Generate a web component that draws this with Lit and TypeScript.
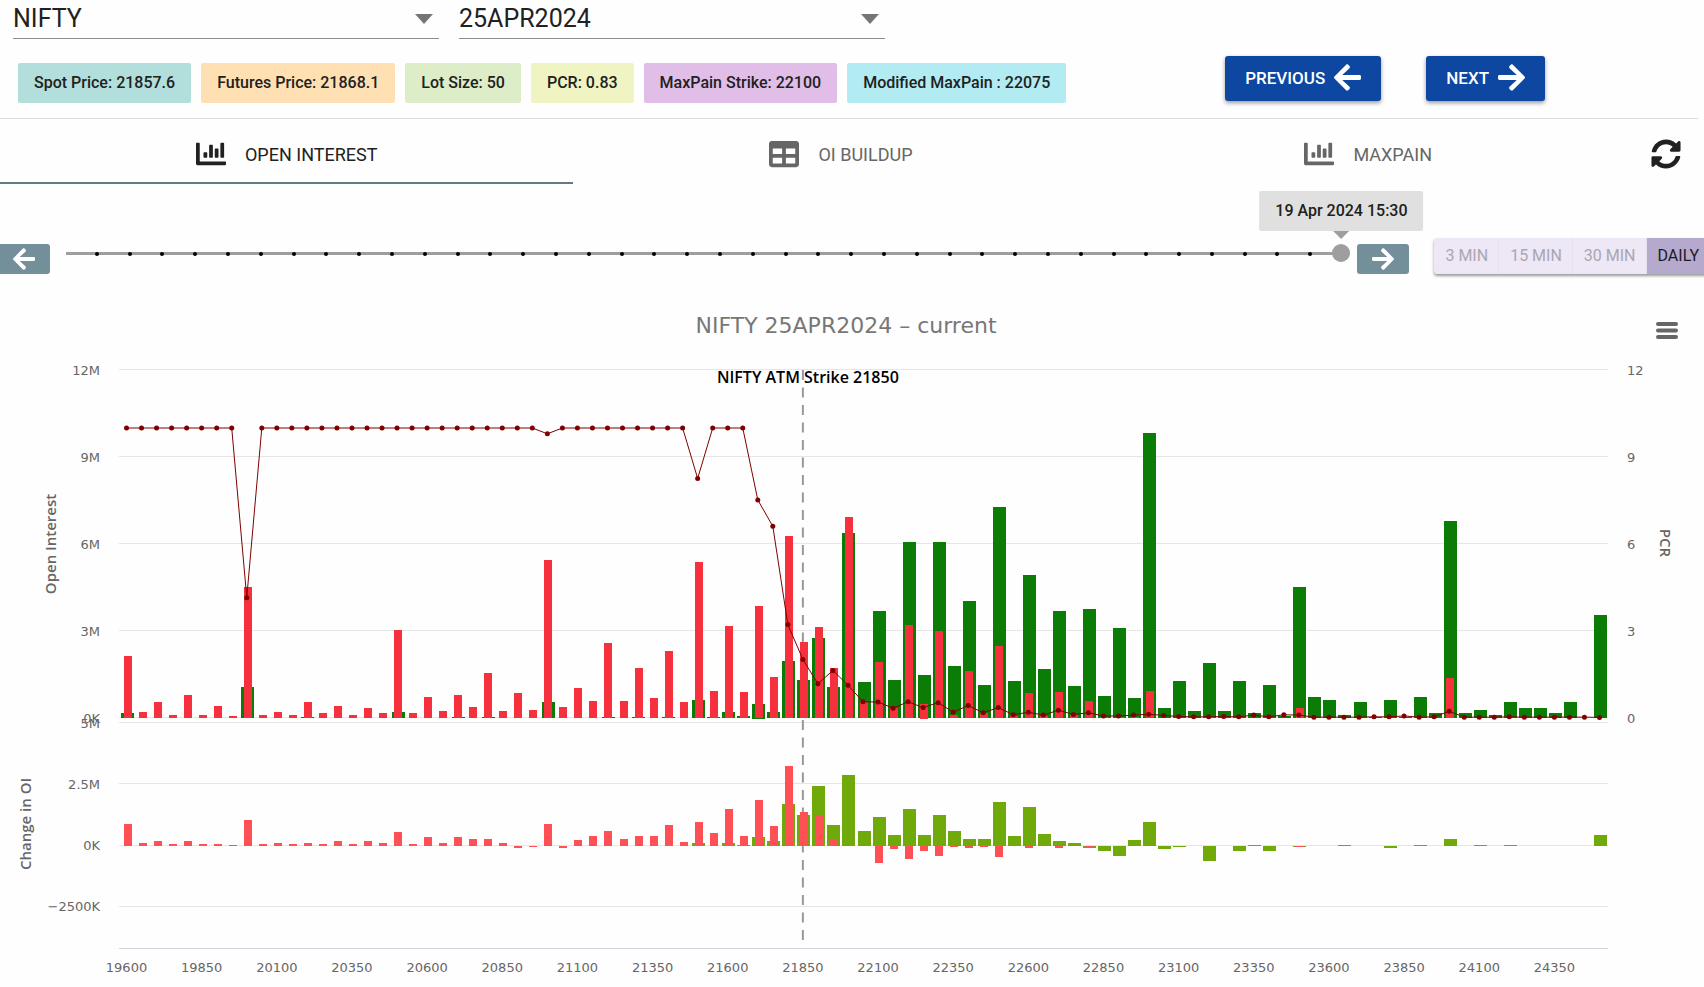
import { LitElement, html, svg, css } from "lit";
import { customElement, property, state } from "lit/decorators.js";
import { classMap } from "lit/directives/class-map.js";

const ICONS: Record<string, { box: string; d: string }> = {
  left: {
    box: "0 32 448 448",
    d: "M257.5 445.1l-22.2 22.2c-9.4 9.4-24.6 9.4-33.9 0L7 273c-9.4-9.4-9.4-24.6 0-33.9L201.4 44.7c9.4-9.4 24.6-9.4 33.9 0l22.2 22.2c9.5 9.5 9.3 25-.4 34.3L136.6 216H424c13.3 0 24 10.7 24 24v32c0 13.3-10.7 24-24 24H136.6l120.5 114.8c9.8 9.3 10 24.8.4 34.3z",
  },
  right: {
    box: "0 32 448 448",
    d: "M190.5 66.9l22.2-22.2c9.4-9.4 24.6-9.4 33.9 0L441 239c9.4 9.4 9.4 24.6 0 33.9L246.6 467.3c-9.4 9.4-24.6 9.4-33.9 0l-22.2-22.2c-9.5-9.5-9.3-25 .4-34.3L311.4 296H24c-13.3 0-24-10.7-24-24v-32c0-13.3 10.7-24 24-24h287.4L190.9 101.2c-9.8-9.3-10-24.8-.4-34.3z",
  },
  chart: {
    box: "0 0 512 512",
    d: "M332.8 320h38.4c6.4 0 12.8-6.4 12.8-12.8V172.8c0-6.4-6.4-12.8-12.8-12.8h-38.4c-6.4 0-12.8 6.4-12.8 12.8v134.4c0 6.4 6.4 12.8 12.8 12.8zm96 0h38.4c6.4 0 12.8-6.4 12.8-12.8V76.8c0-6.4-6.4-12.8-12.8-12.8h-38.4c-6.4 0-12.8 6.4-12.8 12.8v230.4c0 6.4 6.4 12.8 12.8 12.8zm-288 0h38.4c6.4 0 12.8-6.4 12.8-12.8v-70.4c0-6.4-6.4-12.8-12.8-12.8h-38.4c-6.4 0-12.8 6.4-12.8 12.8v70.4c0 6.4 6.4 12.8 12.8 12.8zm96 0h38.4c6.4 0 12.8-6.4 12.8-12.8V108.8c0-6.4-6.4-12.8-12.8-12.8h-38.4c-6.4 0-12.8 6.4-12.8 12.8v198.4c0 6.4 6.4 12.8 12.8 12.8zM496 384H64V80c0-8.84-7.16-16-16-16H16C7.16 64 0 71.16 0 80v336c0 17.67 14.33 32 32 32h464c8.84 0 16-7.16 16-16v-32c0-8.84-7.16-16-16-16z",
  },
  table: {
    box: "0 0 512 512",
    d: "M464 32H48C21.49 32 0 53.49 0 80v352c0 26.51 21.49 48 48 48h416c26.51 0 48-21.49 48-48V80c0-26.51-21.49-48-48-48zM224 416H64v-96h160v96zm0-160H64v-96h160v96zm224 160H288v-96h160v96zm0-160H288v-96h160v96z",
  },
  sync: {
    box: "0 0 512 512",
    d: "M370.72 133.28C339.458 104.008 298.888 87.962 255.848 88c-77.458.068-144.328 53.178-162.791 126.85-1.344 5.363-6.122 9.15-11.651 9.15H24.103c-7.498 0-13.194-6.807-11.807-14.176C33.933 94.924 134.813 8 256 8c66.448 0 126.791 26.136 171.315 68.685L463.03 40.97C478.149 25.851 504 36.559 504 57.941V192c0 13.255-10.745 24-24 24H345.941c-21.382 0-32.09-25.851-16.971-40.971l41.75-41.749zM32 296h134.059c21.382 0 32.09 25.851 16.971 40.971l-41.75 41.75c31.262 29.273 71.835 45.319 114.876 45.28 77.418-.07 144.315-53.144 162.787-126.849 1.344-5.363 6.122-9.15 11.651-9.15h57.304c7.498 0 13.194 6.807 11.807 14.176C478.067 415.076 377.187 502 256 502c-66.448 0-126.791-26.136-171.315-68.685L48.97 471.03C33.851 486.149 8 475.441 8 454.059V320c0-13.255 10.745-24 24-24z",
  },
  menu: {
    box: "0 0 22 18",
    d: "M2 0h18a2 2 0 0 1 0 4H2a2 2 0 0 1 0-4zm0 6.500h18a2 2 0 0 1 0 4H2a2 2 0 0 1 0-4zm0 6.500h18a2 2 0 0 1 0 4H2a2 2 0 0 1 0-4z",
  },
};

const icon = (name: string) => html`
  <svg class="icon" viewBox=${ICONS[name].box} aria-hidden="true"><path d=${ICONS[name].d}></path></svg>
`;

/* Open interest per strike, in millions; strikes run from 19600 in steps of 50. */
const PUT_OI = [
  2.15, 0.21, 0.55, 0.12, 0.8, 0.12, 0.43, 0.08, 4.52, 0.12, 0.21, 0.12, 0.55, 0.16, 0.43, 0.12, 0.33, 0.16, 3.05, 0.16,
  0.72, 0.25, 0.8, 0.38, 1.54, 0.25, 0.85, 0.29, 5.46, 0.38, 1.02, 0.6, 2.57, 0.6, 1.71, 0.68, 2.32, 0.55, 5.38, 0.94,
  3.18, 0.9, 3.87, 1.41, 6.28, 2.61, 3.14, 1.71, 6.93, 0.55, 1.92, 0.33, 3.22, 0.5, 3.01, 0.1, 1.63, 0.16, 2.49, 0.08,
  0.85, 0.08, 0.9, 0.1, 0.6, 0.05, 0.04, 0.05, 0.94, 0, 0, 0, 0.05, 0, 0, 0, 0, 0, 0.33, 0,
  0, 0, 0, 0, 0, 0, 0, 0, 1.37, 0, 0, 0, 0, 0, 0, 0, 0, 0, 0,
];
const CALL_OI = [
  0.16, 0, 0, 0, 0, 0, 0, 0, 1.07, 0, 0, 0, 0.04, 0, 0, 0, 0, 0, 0.21, 0,
  0, 0, 0.04, 0, 0.04, 0, 0, 0, 0.55, 0, 0, 0, 0.04, 0, 0.04, 0, 0.04, 0, 0.63, 0.04,
  0.21, 0.08, 0.5, 0.21, 1.98, 1.32, 2.75, 1.06, 6.37, 1.24, 3.7, 1.32, 6.08, 1.49, 6.08, 1.8, 4.05, 1.15, 7.29, 1.29,
  4.94, 1.68, 3.7, 1.11, 3.75, 0.77, 3.09, 0.68, 9.83, 0.33, 1.29, 0.25, 1.9, 0.25, 1.29, 0.16, 1.15, 0.07, 4.52, 0.72,
  0.63, 0.12, 0.55, 0.04, 0.63, 0.04, 0.72, 0.16, 6.8, 0.16, 0.29, 0.12, 0.55, 0.33, 0.33, 0.16, 0.55, 0, 3.56,
];
const PCR = [
  10, 10, 10, 10, 10, 10, 10, 10, 4.15, 10, 10, 10, 10, 10, 10, 10, 10, 10, 10, 10,
  10, 10, 10, 10, 10, 10, 10, 10, 9.8, 10, 10, 10, 10, 10, 10, 10, 10, 10, 8.26, 10,
  10, 10, 7.52, 6.61, 3.22, 2.02, 1.18, 1.64, 1.13, 0.56, 0.55, 0.34, 0.56, 0.36, 0.53, 0.2, 0.43, 0.18, 0.36, 0.11,
  0.2, 0.1, 0.27, 0.12, 0.18, 0.07, 0.07, 0.1, 0.13, 0.09, 0.05, 0.04, 0.04, 0.05, 0.04, 0.1, 0.04, 0.11, 0.1, 0.03,
  0.03, 0.03, 0.03, 0.04, 0.04, 0.07, 0.03, 0.04, 0.23, 0.03, 0.03, 0.03, 0.04, 0.03, 0.03, 0.03, 0.03, 0.03, 0.02,
];
const PUT_CHANGE = [
  0.91, 0.14, 0.2, 0.09, 0.2, 0.09, 0.09, 0.04, 1.07, 0.09, 0.14, 0.09, 0.14, 0.09, 0.2, 0.09, 0.2, 0.14, 0.57, 0.09,
  0.35, 0.14, 0.35, 0.3, 0.3, 0.14, -0.1, -0.06, 0.91, -0.1, 0.25, 0.42, 0.6, 0.3, 0.42, 0.42, 0.87, 0.18, 0.96, 0.55,
  1.53, 0.42, 1.88, 0.81, 3.27, 1.37, 1.27, 0.25, 0, 0.04, -0.7, -0.14, -0.55, -0.2, -0.4, -0.05, -0.1, -0.05, -0.45, 0,
  -0.1, 0, -0.1, 0, -0.05, 0, 0, 0, 0, 0, 0, 0, 0, 0, 0, 0, 0, 0, -0.05, 0,
  0, 0, 0, 0, 0, 0, 0, 0, 0, 0, 0, 0, 0, 0, 0, 0, 0, 0, 0,
];
const CALL_CHANGE = [
  0, 0, 0, 0, 0, 0, 0, 0, 0, 0, 0, 0, 0, 0, 0, 0, 0, 0, 0, 0,
  0, 0, 0, 0, 0, 0, 0, 0, 0, 0, 0, 0, 0, 0, 0, 0, 0, 0, 0.13, 0,
  0.13, 0.05, 0.35, 0.2, 1.73, 1.27, 2.44, 0.87, 2.9, 0.6, 1.18, 0.45, 1.53, 0.45, 1.27, 0.6, 0.3, 0.3, 1.78, 0.4,
  1.58, 0.5, 0.2, 0.14, -0.08, -0.2, -0.4, 0.25, 0.97, -0.14, -0.06, 0, -0.62, 0, -0.2, 0.04, -0.2, 0, -0.06, 0,
  0, 0.04, 0, 0, -0.1, 0, 0.04, 0, 0.3, 0, 0.04, 0, 0.04, 0, 0, 0, 0, 0, 0.46,
];

@customElement("oi-chart")
class OiChart extends LitElement {
  static styles = css`
    :host {
      display: block;
      position: relative;
      font-family: "DejaVu Sans", Verdana, sans-serif;
    }
    .plot {
      display: block;
      width: 100%;
    }
    .grid {
      stroke: #e6e6e6;
    }
    .axis {
      stroke: #d0d4dc;
    }
    .bars,
    .lines {
      shape-rendering: crispEdges;
    }
    .call { fill: #0b7d06; }
    .put { fill: #f7303e; }
    .call-change { fill: #70aa0a; }
    .put-change { fill: #ff5056; }
    .pcr-line { fill: none; stroke: #800000; }
    .pcr-dot { fill: #800000; }
    .atm { stroke: #999999; stroke-width: 2; stroke-dasharray: 10 7.5; }
    .title { font-size: 22px; fill: #777777; text-anchor: middle; }
    .tick { font-size: 13px; fill: #666666; }
    .end { text-anchor: end; }
    .middle { text-anchor: middle; }
    .name,
    .atm-name {
      font-family: "Open Sans", "Noto Sans", sans-serif;
      font-size: 15px;
      font-weight: 600;
      text-anchor: middle;
      fill: #666666;
    }
    .atm-name {
      font-size: 16px;
      fill: #000000;
    }
    .menu {
      position: absolute;
      top: 27px;
      right: 18px;
      padding: 8px;
      border: 0;
      background: none;
      line-height: 0;
      cursor: pointer;
    }
    .icon {
      width: 22px;
      height: 18px;
      fill: #666666;
    }
  `;

  @state() private width = 1704;
  private observer = new ResizeObserver(() => this.measure());

  private measure() {
    if (this.clientWidth > 0) this.width = this.clientWidth;
  }

  connectedCallback() {
    super.connectedCallback();
    this.observer.observe(this);
  }

  disconnectedCallback() {
    this.observer.disconnect();
    super.disconnectedCallback();
  }

  firstUpdated() {
    this.measure();
  }

  render() {
    const left = 119;
    const right = this.width - 97;
    const step = (right - left) / PCR.length;
    const center = (i: number) => left + step * (i + 0.5);
    const oiY = (v: number) => 431 - v * 29;
    const changeY = (v: number) => 559 - v * 24.5;

    const bars = (values: number[], y: (v: number) => number, width: number, name: string) =>
      values.map((v, i) => {
        if (v === 0) return null;
        const top = Math.round(Math.min(y(v), y(0)));
        const height = Math.max(1, Math.round(Math.abs(y(v) - y(0))));
        return svg`<rect class=${name} x=${Math.round(center(i) - width / 2 + 1)} y=${top} width=${width} height=${height}></rect>`;
      });
    const rule = (y: number, name: string) =>
      svg`<line class=${name} x1=${left} x2=${right + 1} y1=${y + 0.5} y2=${y + 0.5}></line>`;
    const strikes = PCR.map((_, i) => i).filter((i) => i % 5 === 0 && i < 96);
    const mid = (left + right) / 2 - 17;

    return html`
      <svg class="plot" height="700" role="img" aria-label="Open interest and change in open interest by strike">
        <g class="lines">
          ${[12, 9, 6, 3, 0].map((v) => rule(Math.floor(oiY(v)) - 1, "grid"))}
          ${[5, 2.5, 0, -2.5].map((v) => rule(Math.floor(changeY(v)) - 1, "grid"))}
          ${rule(661, "axis")}
        </g>
        <line class="atm" x1=${center(45)} x2=${center(45)} y1="83" y2="660"></line>
        <g class="bars">
          ${bars(CALL_OI, oiY, 13, "call")} ${bars(PUT_OI, oiY, 8, "put")}
          ${bars(CALL_CHANGE, changeY, 13, "call-change")} ${bars(PUT_CHANGE, changeY, 8, "put-change")}
        </g>
        <polyline class="pcr-line" points=${PCR.map((v, i) => `${center(i)},${oiY(v)}`).join(" ")}></polyline>
        ${PCR.map((v, i) => svg`<circle class="pcr-dot" cx=${center(i)} cy=${oiY(v)} r="2.500"></circle>`)}
        <text class="title" x=${mid} y="46">NIFTY 25APR2024 – current</text>
        <text class="atm-name" x=${center(45) + 5} y="96">NIFTY ATM Strike 21850</text>
        ${[[12, "12M"], [9, "9M"], [6, "6M"], [3, "3M"], [0, "0K"]].map(
          ([v, t]) => svg`
            <text class="tick end" x="100" y=${oiY(v as number) + 5}>${t}</text>
            <text class="tick" x=${right + 20} y=${oiY(v as number) + 5}>${v}</text>`
        )}
        ${[[5, "5M"], [2.5, "2.5M"], [0, "0K"], [-2.5, "−2500K"]].map(
          ([v, t]) => svg`<text class="tick end" x="100" y=${changeY(v as number) + 4}>${t}</text>`
        )}
        ${strikes.map((i) => svg`<text class="tick middle" x=${center(i)} y="685">${19600 + i * 50}</text>`)}
        <text class="name" transform="translate(56 257) rotate(-90)">Open Interest</text>
        <text class="name" transform="translate(31 537) rotate(-90)">Change in OI</text>
        <text class="name" transform=${`translate(${right + 53} 256) rotate(90)`}>PCR</text>
      </svg>
      <button class="menu" aria-label="Chart menu">${icon("menu")}</button>
    `;
  }
}

@customElement("time-slider")
class TimeSlider extends LitElement {
  static styles = css`
    :host {
      display: block;
      flex: 1;
      min-width: 0;
    }
    .rail {
      position: relative;
      height: 3px;
      background: #9e9e9e;
    }
    .ticks {
      display: flex;
      justify-content: space-evenly;
      align-items: center;
      height: 100%;
    }
    .tick {
      width: 4px;
      height: 4px;
      border-radius: 2px;
      background: #000000;
    }
    .range {
      position: absolute;
      top: -8px;
      left: -9px;
      width: calc(100% + 18px);
      height: 18px;
      margin: 0;
      appearance: none;
      background: none;
    }
    .range::-webkit-slider-thumb {
      appearance: none;
      width: 18px;
      height: 18px;
      border-radius: 9px;
      background: #9e9e9e;
    }
    .tip {
      position: absolute;
      right: 0;
      bottom: 24px;
      transform: translateX(50%);
      padding: 0 16px;
      border-radius: 2px;
      background: #e0e0e0;
      color: #212121;
      font-size: 16px;
      font-weight: 500;
      line-height: 40px;
      white-space: nowrap;
    }
    .tip::after {
      content: "";
      position: absolute;
      top: 100%;
      left: 50%;
      margin-left: -8px;
      border: 8px solid transparent;
      border-top-color: #9e9e9e;
      border-bottom: 0;
    }
  `;

  @property() label = "";

  render() {
    return html`
      <div class="rail">
        <div class="ticks">${Array.from({ length: 38 }, () => html`<span class="tick"></span>`)}</div>
        <input class="range" type="range" min="0" max="39" value="39" aria-label="Time" />
        <output class="tip">${this.label}</output>
      </div>
    `;
  }
}

@customElement("app-root")
class AppRoot extends LitElement {
  static styles = css`
    :host {
      display: block;
      overflow: hidden;
      color: #212121;
      background: #fefefe;
      font-family: Roboto, sans-serif;
      font-size: 16px;
    }
    button {
      font-family: inherit;
      cursor: pointer;
    }
    .icon {
      flex: none;
      width: 30px;
      height: 30px;
      fill: currentColor;
    }
    .selects {
      display: flex;
      gap: 20px;
      padding: 0 13px;
    }
    .field {
      position: relative;
      flex: 0 0 25vw;
      border-bottom: 1px solid #8c8c8c;
    }
    .field::after {
      content: "";
      position: absolute;
      top: 14px;
      right: 6px;
      border: 9px solid transparent;
      border-top: 10px solid #757575;
      border-bottom: 0;
      pointer-events: none;
    }
    .select {
      display: block;
      width: 100%;
      height: 38px;
      padding: 0 0 1px;
      border: 0;
      appearance: none;
      background: none;
      color: inherit;
      font: 25px Roboto, sans-serif;
    }
    .summary {
      display: flex;
      justify-content: space-between;
      margin-right: 6px;
      padding: 17px 153px 15px 18px;
      border-bottom: 1px solid #dddddd;
    }
    .chips {
      display: flex;
      gap: 10px;
      margin: 7px 0 0;
      padding: 0;
      list-style: none;
    }
    .chip {
      padding: 0 16px;
      border-radius: 2px;
      font-weight: 500;
      line-height: 40px;
      white-space: nowrap;
    }
    .teal { background: #b2dfdb; }
    .orange { background: #ffe0b2; }
    .green { background: #dcedc8; }
    .lime { background: #f0f4c3; }
    .purple { background: #e1bee7; }
    .cyan { background: #b2ebf2; }
    .moves {
      display: flex;
      gap: 45px;
    }
    .move {
      display: flex;
      align-items: center;
      gap: 9px;
      height: 45px;
      padding: 0 20px 2px;
      border: 0;
      border-radius: 3px;
      background: #0d47a1;
      color: #ffffff;
      font-size: 17px;
      font-weight: 500;
      box-shadow: 0 2px 4px rgba(0, 0, 0, 0.4);
    }
    .move .icon {
      width: 27px;
      height: 27px;
    }
    .tabs {
      display: flex;
      margin-top: 5px;
    }
    .tab {
      display: flex;
      flex: 1 1 auto;
      align-items: center;
      justify-content: center;
      gap: 19px;
      height: 60px;
      padding: 2px 0 0;
      border: 0;
      border-bottom: 2px solid transparent;
      background: none;
      color: #666666;
      font-size: 18px;
    }
    .tab.on {
      border-color: #5f7a8a;
      color: #212121;
    }
    .refresh {
      flex: none;
      width: 76px;
      padding: 2px 0 0;
      border: 0;
      background: none;
      color: #212121;
    }
    .timeline {
      display: flex;
      align-items: flex-start;
      margin: 54px -6px 0 -2px;
    }
    .arrow {
      display: flex;
      flex: none;
      align-items: center;
      justify-content: center;
      width: 52px;
      height: 30px;
      margin-top: 6px;
      padding: 0;
      border: 0;
      border-radius: 3px;
      background: #738f9a;
      color: #ffffff;
    }
    .arrow .icon {
      width: 22px;
      height: 22px;
    }
    .track {
      display: flex;
      flex: 1;
      padding: 14px 16px 0;
    }
    .ranges {
      display: flex;
      margin-left: 25px;
      border-radius: 3px;
      background: #ede7f6;
      box-shadow: 0 2px 3px rgba(0, 0, 0, 0.4);
    }
    .step {
      height: 36px;
      padding: 0 11px 1px;
      border: 0;
      background: none;
      box-shadow: inset -1px 0 #e6dff0;
      color: #aaa6b1;
      font-size: 16px;
      white-space: nowrap;
    }
    .step.on {
      background: #b5a9cd;
      box-shadow: none;
      color: #1d1a24;
    }
    .chart {
      margin-top: 13px;
    }
  `;

  @state() private tab = "OPEN INTEREST";
  @state() private step = "DAILY";

  render() {
    const chips = [
      ["teal", "Spot Price: 21857.6"],
      ["orange", "Futures Price: 21868.1"],
      ["green", "Lot Size: 50"],
      ["lime", "PCR: 0.83"],
      ["purple", "MaxPain Strike: 22100"],
      ["cyan", "Modified MaxPain : 22075"],
    ];
    const tabs = [
      ["chart", "OPEN INTEREST"],
      ["table", "OI BUILDUP"],
      ["chart", "MAXPAIN"],
    ];
    return html`
      <header>
        <div class="selects">
          <div class="field">
            <select class="select" aria-label="Symbol"><option>NIFTY</option></select>
          </div>
          <div class="field">
            <select class="select" aria-label="Expiry"><option>25APR2024</option></select>
          </div>
        </div>
        <div class="summary">
          <ul class="chips">
            ${chips.map(([tone, text]) => html`<li class="chip ${tone}">${text}</li>`)}
          </ul>
          <div class="moves">
            <button class="move">PREVIOUS ${icon("left")}</button>
            <button class="move">NEXT ${icon("right")}</button>
          </div>
        </div>
      </header>
      <nav class="tabs" role="tablist">
        ${tabs.map(
          ([glyph, name]) => html`
            <button
              class=${classMap({ tab: true, on: this.tab === name })}
              role="tab"
              aria-selected=${this.tab === name}
              @click=${() => (this.tab = name)}
            >
              ${icon(glyph)} ${name}
            </button>
          `
        )}
        <button class="refresh" aria-label="Refresh">${icon("sync")}</button>
      </nav>
      <main>
        <div class="timeline">
          <button class="arrow" aria-label="Earlier">${icon("left")}</button>
          <div class="track"><time-slider label="19 Apr 2024 15:30"></time-slider></div>
          <button class="arrow" aria-label="Later">${icon("right")}</button>
          <div class="ranges">
            ${["3 MIN", "15 MIN", "30 MIN", "DAILY"].map(
              (name) => html`
                <button class=${classMap({ step: true, on: this.step === name })} @click=${() => (this.step = name)}>
                  ${name}
                </button>
              `
            )}
          </div>
        </div>
        <oi-chart class="chart"></oi-chart>
      </main>
    `;
  }
}
